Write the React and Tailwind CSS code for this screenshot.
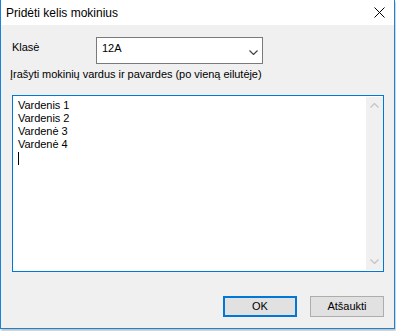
import React from 'react';

const names = ['Vardenis 1', 'Vardenis 2', 'Vardenė 3', 'Vardenė 4'];

const Chevron = ({ up, className }) => (
    <svg width="9" height="5" viewBox="0 0 9 5" className={className}>
        <path d={up ? 'M0.5 4.5 L4.5 0.5 L8.5 4.5' : 'M0.5 0.5 L4.5 4.5 L8.5 0.5'} fill="none" stroke="currentColor" strokeWidth="1.2" />
    </svg>
);

export default function App() {
    return (
        <div className="w-[396px] h-[331px] bg-white font-['Liberation_Sans',Arial,sans-serif] text-black">
            <div className="w-[395px] h-[329px] flex flex-col border-x border-b border-[#1883d7] shadow-[1px_2px_2px_rgba(0,0,0,0.25)]">

                {/* title bar */}
                <div className="h-[25px] bg-white flex items-center justify-between pl-[5px] pr-[9px]">
                    <span className="text-[12px] leading-none">Pridėti kelis mokinius</span>
                    <svg width="11" height="11" viewBox="0 0 11 11">
                        <path d="M0.5 0.5 L10.5 10.5 M10.5 0.5 L0.5 10.5" stroke="#000" strokeWidth="1" />
                    </svg>
                </div>

                {/* body */}
                <div className="flex-1 bg-[#f0f0f0] pl-[11px] pr-[10px] pt-[12px] text-[11px] leading-[13px] tracking-[-0.04px]">
                    <div className="flex">
                        <span className="w-[84px] pt-[4px]">Klasė</span>
                        <div className="w-[167px] h-[27px] border border-[#7a7a7a] bg-white flex justify-between pl-[5px] pr-[4px] pt-[4px]">
                            <span>12A</span>
                            <Chevron className="mt-[8px] text-[#444]" />
                        </div>
                    </div>

                    <div className="mt-[4px] -ml-[2px]">Įrašyti mokinių vardus ir pavardes (po vieną eilutėje)</div>

                    <div className="mt-[14px] w-[372px] h-[177px] border border-[#0078d7] bg-white flex">
                        <div className="flex-1 pl-[5px] pt-[3px]">
                            {names.map((n, i) => (
                                <div key={i}>{n}</div>
                            ))}
                            <div className="w-px h-[13px] bg-black mt-[1px]"></div>
                        </div>
                        <div className="w-[17px] my-px bg-[#f0f0f0] flex flex-col items-center justify-between py-[6px] text-[#c3c3c3]">
                            <Chevron up />
                            <Chevron />
                        </div>
                    </div>

                    <div className="mt-[24px] flex justify-end gap-[13px] tracking-normal">
                        <button className="w-[74px] h-[21px] border-2 border-[#0078d7] bg-[#e1e1e1] text-[11px]">OK</button>
                        <button className="w-[74px] h-[21px] border border-[#adadad] bg-[#e1e1e1] text-[11px]">Atšaukti</button>
                    </div>
                </div>
            </div>
        </div>
    );
}
